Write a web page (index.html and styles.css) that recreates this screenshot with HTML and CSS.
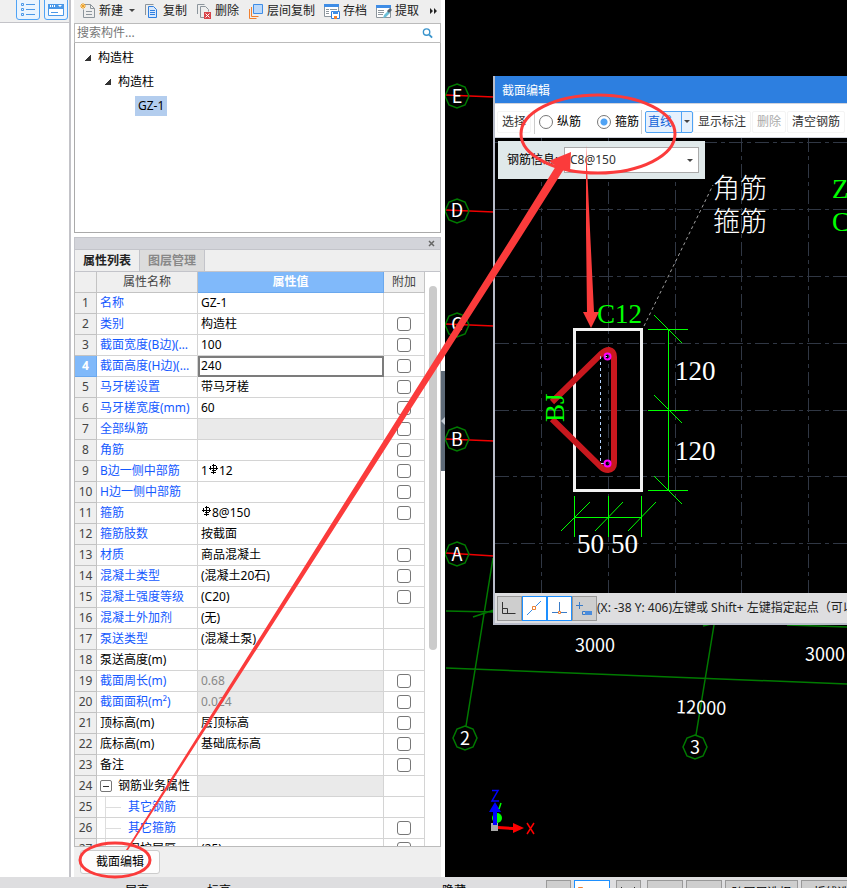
FILE: index.html
```html
<!DOCTYPE html>
<html lang="zh-CN">
<head>
    <meta charset="UTF-8">
    <title>截面编辑</title>
    <link rel="stylesheet" href="styles.css">
</head>
<body>
    <svg width="0" height="0" class="defs">
        <symbol id="rebar" viewBox="0 0 10 11">
            <path d="M4.500 0v10M2.500 1.500h4M1.500 2v4M7.500 2v4M2.500 6.500h4M0 4.500h9M2 8.500h5" fill="none" stroke="#000" shape-rendering="crispEdges"/>
        </symbol>
    </svg>
    <div class="main">
        <div class="side">
            <div class="side-bar">
                <button aria-label="列表"><svg width="16" height="16" viewBox="0 0 16 16" fill="none" stroke="#4a98e8"><path d="M6 3.500h9M6 8.500h9M6 13.500h9M1.500 2.500h2v2h-2zM1.500 7.500h2v2h-2zM1.500 12.500h2v2h-2z"/></svg></button>
                <button aria-label="窗口"><svg width="16" height="16" viewBox="0 0 16 16"><path d="M.500 3.500h15v11H.500z" fill="#fff" stroke="#4a98e8"/><path d="M0 3h16v5H0z" fill="#4a98e8"/><path d="M3 11.500h7" stroke="#4a98e8"/><path d="M2 4h1v2H2zM4 4h1v2H4zM6 4h1v2H6zM10 4h4l-2 2z" fill="#fff"/></svg></button>
            </div>
        </div>
        <div class="panel">
            <div class="toolbar">
                <button><svg width="16" height="16" viewBox="0 0 16 16" fill="none"><path d="M4.500 1.500h6l4 4v9h-11v-8M10.500 1.500v4h4M6 8.500h6M6 11.500h6" stroke="#8c959c"/><path d="M3 0v6M0 3h6M1 1l4 4M5 1l-4 4" stroke="#f0a020"/></svg>新建<i class="caret"></i></button>
                <button><svg width="16" height="16" viewBox="0 0 16 16" fill="none"><path d="M1.500 12V1.500h8" stroke="#8c959c"/><path d="M4.500 3.500h5l3 3v8h-8z" fill="#d8e8fc" stroke="#2f7fe0"/><path d="M6 7.500h5M6 9.500h5M6 11.500h5" stroke="#2f7fe0"/></svg>复制</button>
                <button><svg width="16" height="16" viewBox="0 0 16 16" fill="none"><path d="M1.500 11V1.500h7M8 14.500H4.500v-11h5l3 3v2" stroke="#8c959c"/><path d="M8 9h7v7H8z" fill="#d9444a"/><path d="M9.500 10.500l4 4M13.500 10.500l-4 4" stroke="#fff"/></svg>删除</button>
                <button><svg width="16" height="16" viewBox="0 0 16 16" fill="none"><path d="M1.500 6v9.500h7M3.500 4v9.500h7" stroke="#f08030"/><path d="M5.500 1.500h9v9h-9z" fill="#bcd9fa" stroke="#3f8de6"/></svg>层间复制</button>
                <button><svg width="16" height="16" viewBox="0 0 16 16" fill="none"><path d="M.500 1.500h14v12H.500z" fill="#fff" stroke="#8c959c"/><path d="M0 1h15v3H0z" fill="#3f8de6"/><path d="M2 6.500h3M2 8.500h3M2 10.500h3M6 6.500h7" stroke="#8c959c"/><path d="M7.500 8.500h8v7h-8z" fill="#fff" stroke="#2f7fe0"/><path d="M9 8h5v3H9z" fill="#3f8de6"/><path d="M10 13h3v3h-3z" fill="#f08030"/></svg>存档</button>
                <button><svg width="16" height="16" viewBox="0 0 16 16" fill="none"><path d="M.500 3.500h14v11H.500z" fill="#fff" stroke="#8c959c"/><path d="M0 2h15v3H0z" fill="#3f8de6"/><path d="M2 7.500h6M2 9.500h6M2 11.500h5" stroke="#8c959c"/><path d="M7 15l1-3 4-4 2 2-4 4z" fill="#6cc0d8"/><path d="M11 8l3-3 2 2-3 3z" fill="#566470"/></svg>提取</button>
                <button class="more" aria-label="更多"><svg width="8" height="6" viewBox="0 0 8 6"><path d="M0 0l3 3-3 3zM4 0l3 3-3 3z" fill="#222"/></svg></button>
            </div>
            <div class="search">
                <input type="text" placeholder="搜索构件..." aria-label="搜索构件">
                <svg width="11" height="12" viewBox="0 0 12 12" fill="none" stroke="#3a94cc"><circle cx="5" cy="5" r="3.500" stroke-width="1.500"/><path d="M8 8l3 3" stroke-width="2"/></svg>
            </div>
            <ul class="tree">
                <li><span><i class="fold"></i>构造柱</span>
                    <ul>
                        <li><span><i class="fold"></i>构造柱</span>
                            <ul>
                                <li><span><b>GZ-1</b></span></li>
                            </ul>
                        </li>
                    </ul>
                </li>
            </ul>
            <div class="dock-title"><button aria-label="关闭"><svg width="7" height="7" viewBox="0 0 7 7"><path d="M1 1l5 5M6 1L1 6" stroke="#666" stroke-width="1.500"/></svg></button></div>
            <div class="tabs">
                <button class="on">属性列表</button>
                <button>图层管理</button>
            </div>
            <div class="props">
                <table>
                    <colgroup><col class="c-num"><col class="c-name"><col><col class="c-add"></colgroup>
                    <thead>
                        <tr><th></th><th>属性名称</th><th class="cur">属性值</th><th>附加</th></tr>
                    </thead>
                    <tbody>
                        <tr><th>1</th><td class="key">名称</td><td>GZ-1</td><td></td></tr>
                        <tr><th>2</th><td class="key">类别</td><td>构造柱</td><td><input type="checkbox" aria-label="类别"></td></tr>
                        <tr><th>3</th><td class="key">截面宽度(B边)(mm)</td><td>100</td><td><input type="checkbox" aria-label="截面宽度"></td></tr>
                        <tr><th class="cur">4</th><td class="key">截面高度(H边)(mm)</td><td class="edit">240</td><td><input type="checkbox" aria-label="截面高度"></td></tr>
                        <tr><th>5</th><td class="key">马牙槎设置</td><td>带马牙槎</td><td><input type="checkbox" aria-label="马牙槎设置"></td></tr>
                        <tr><th>6</th><td class="key">马牙槎宽度(mm)</td><td>60</td><td><input type="checkbox" aria-label="马牙槎宽度"></td></tr>
                        <tr><th>7</th><td class="key">全部纵筋</td><td class="off"></td><td><input type="checkbox" aria-label="全部纵筋"></td></tr>
                        <tr><th>8</th><td class="key">角筋</td><td></td><td><input type="checkbox" aria-label="角筋"></td></tr>
                        <tr><th>9</th><td class="key">B边一侧中部筋</td><td>1<svg class="rebar"><use href="#rebar"/></svg>12</td><td><input type="checkbox" aria-label="B边一侧中部筋"></td></tr>
                        <tr><th>10</th><td class="key">H边一侧中部筋</td><td></td><td><input type="checkbox" aria-label="H边一侧中部筋"></td></tr>
                        <tr><th>11</th><td class="key">箍筋</td><td><svg class="rebar"><use href="#rebar"/></svg>8@150</td><td><input type="checkbox" aria-label="箍筋"></td></tr>
                        <tr><th>12</th><td class="key">箍筋肢数</td><td>按截面</td><td></td></tr>
                        <tr><th>13</th><td class="key">材质</td><td>商品混凝土</td><td><input type="checkbox" aria-label="材质"></td></tr>
                        <tr><th>14</th><td class="key">混凝土类型</td><td>(混凝土20石)</td><td><input type="checkbox" aria-label="混凝土类型"></td></tr>
                        <tr><th>15</th><td class="key">混凝土强度等级</td><td>(C20)</td><td><input type="checkbox" aria-label="混凝土强度等级"></td></tr>
                        <tr><th>16</th><td class="key">混凝土外加剂</td><td>(无)</td><td></td></tr>
                        <tr><th>17</th><td class="key">泵送类型</td><td>(混凝土泵)</td><td></td></tr>
                        <tr><th>18</th><td>泵送高度(m)</td><td></td><td></td></tr>
                        <tr><th>19</th><td class="key">截面周长(m)</td><td class="off">0.68</td><td><input type="checkbox" aria-label="截面周长"></td></tr>
                        <tr><th>20</th><td class="key">截面面积(m²)</td><td class="off">0.024</td><td><input type="checkbox" aria-label="截面面积"></td></tr>
                        <tr><th>21</th><td>顶标高(m)</td><td>层顶标高</td><td><input type="checkbox" aria-label="顶标高"></td></tr>
                        <tr><th>22</th><td>底标高(m)</td><td>基础底标高</td><td><input type="checkbox" aria-label="底标高"></td></tr>
                        <tr><th>23</th><td>备注</td><td></td><td><input type="checkbox" aria-label="备注"></td></tr>
                        <tr><th>24</th><td><button class="minus" aria-label="折叠"></button>钢筋业务属性</td><td class="off"></td><td></td></tr>
                        <tr><th>25</th><td class="key child">其它钢筋</td><td></td><td></td></tr>
                        <tr><th>26</th><td class="key child">其它箍筋</td><td></td><td><input type="checkbox" aria-label="其它箍筋"></td></tr>
                        <tr><th>27</th><td class="child">保护层厚度(mm)</td><td>(25)</td><td><input type="checkbox" aria-label="保护层厚度"></td></tr>
                    </tbody>
                </table>
                <div class="scroll"><div class="thumb"></div></div>
            </div>
            <div class="panel-foot"><button>截面编辑</button></div>
        </div>
        <div class="splitter"><div class="grip"><svg width="4" height="8" viewBox="0 0 4 8"><path d="M4 0v8L0 4z" fill="#c5ccd4"/></svg></div></div>
        <div class="view">
            <!-- 轴网 -->
            <svg class="plan" width="100%" height="100%">
                <g transform="translate(-445)">
                    <g stroke="#f00000" stroke-width="1.500">
                        <path d="M446 95l48 2M446 210l48 2M446 324l48 2M446 439l48 2M446 553l48 3"/>
                    </g>
                    <g fill="none" stroke="#007a00" stroke-width="1.500">
                        <path id="node" d="M457 84l8 3 4 9-4 9-8 3-8-3-4-9 4-9z"/>
                        <use href="#node" y="115"/>
                        <use href="#node" y="229"/>
                        <use href="#node" y="343"/>
                        <use href="#node" y="458"/>
                        <use href="#node" x="8" y="642"/>
                        <use href="#node" x="238" y="651"/>
                        <path d="M493 558l-27 168M446 611l48 1M473 617l21-7M446 668l401 16M714 625l-18 110M703 626l8-2M787 625l60 2"/>
                    </g>
                    <g class="axis-name">
                        <text x="457" y="103">E</text>
                        <text x="457" y="217">D</text>
                        <text x="457" y="331">C</text>
                        <text x="457" y="446">B</text>
                        <text x="457" y="561">A</text>
                        <text x="465" y="745">2</text>
                        <text x="695" y="754">3</text>
                        <text x="595" y="652">3000</text>
                        <text x="825" y="661">3000</text>
                        <text x="701" y="714" transform="rotate(2 701 714)">12000</text>
                    </g>
                    <!-- 坐标系 -->
                    <circle cx="497" cy="818" r="5" fill="#0f0"/>
                    <path d="M491 823h7v8h-7z" fill="#aaa"/>
                    <path d="M493 825v-13h-4l6-10 6 10h-4v13z" fill="#00f"/>
                    <path d="M498 826l15 1v-4l11 5-11 5v-3l-15-1z" fill="#f00"/>
                    <g fill="none">
                        <path d="M492 790.500h6l-6 10.500h7" stroke="#00f" stroke-width="1.500"/>
                        <path d="M501 803l-2 6" stroke="#0f0" stroke-width="1.500"/>
                        <path d="M527 823l7 11M534 823l-7 11" stroke="#f00" stroke-width="1.500"/>
                    </g>
                </g>
            </svg>
            <div class="dialog">
                <div class="dialog-title">截面编辑</div>
                <div class="dialog-bar">
                    <button>选择</button>
                    <div class="group">
                        <label><input type="radio" name="bar">纵筋</label>
                        <label><input type="radio" name="bar" checked>箍筋</label>
                    </div>
                    <div class="split"><button>直线</button><button aria-label="更多画法"><i class="caret"></i></button></div>
                    <button>显示标注</button>
                    <button disabled>删除</button>
                    <button>清空钢筋</button>
                </div>
                <div class="canvas">
                    <svg width="100%" height="100%">
                        <g transform="translate(-495 -138)">
                            <path class="grid" d="M541.500 138v460M608.500 138v460M675.500 138v460M741.500 138v460M808.500 138v460M495 142.500h800M495 209.500h800M495 276.500h800M495 343.500h800M495 410.500h800M495 476.500h800M495 543.500h800"/>
                            <path d="M644 326l69-141" stroke="#a0a0a0" stroke-dasharray="3 3"/>
                            <path d="M574.500 329.500h67v161h-67z" fill="none" stroke="#f2f2f2" stroke-width="3"/>
                            <path d="M552 402l49-48q4-4 8-4q5 1 5 7v106q0 6-6 7q-4 0-7-3l-49-48" fill="none" stroke="#c8181e" stroke-width="6"/>
                            <path d="M607 356.500h-6.500v107h6.500" fill="none" stroke="#b4d4ff" stroke-dasharray="3 3"/>
                            <g fill="none" stroke="#f0f" stroke-width="2">
                                <circle cx="607.500" cy="356.500" r="3"/>
                                <circle cx="607.500" cy="463.500" r="3"/>
                            </g>
                            <g stroke="#0f0">
                                <path d="M668.500 329v162M648 329.500h40M648 410.500h40M648 490.500h40M654 315l28 28M654 395l28 28M654 476l28 28"/>
                                <path d="M574 517.500h68M574.500 496v41M608.500 496v41M641.500 496v41M561 531l29-29M595 531l28-29M628 531l28-29"/>
                            </g>
                            <g class="cad">
                                <text x="713" y="198">角筋</text>
                                <text x="713" y="231">箍筋</text>
                                <text x="675" y="380">120</text>
                                <text x="675" y="460">120</text>
                                <text x="577" y="553">50</text>
                                <text x="611" y="553">50</text>
                            </g>
                            <g class="cad green">
                                <text x="832" y="198">Z</text>
                                <text x="832" y="231">C</text>
                                <text x="597" y="323">C12</text>
                                <text transform="translate(564 422) rotate(-90)">BJ</text>
                            </g>
                        </g>
                    </svg>
                    <div class="info">
                        <label for="bar-info">钢筋信息:</label>
                        <div class="combo">
                            <select id="bar-info"><option>C8@150</option></select>
                            <i class="caret"></i>
                        </div>
                    </div>
                </div>
                <div class="dialog-status">
                    <button aria-label="正交"><svg width="23" height="23" viewBox="0 0 23 23"><path d="M4.500 5v11.500h13M4.500 11.500h5v5" fill="none" stroke="#333"/></svg></button>
                    <button class="on" aria-label="中点"><svg width="23" height="23" viewBox="0 0 23 23"><path d="M4 18L18 4" stroke="#3a8ee6"/><path d="M9.500 9.500h3v3h-3z" fill="#fff" stroke="#f08030"/></svg></button>
                    <button class="on" aria-label="垂点"><svg width="23" height="23" viewBox="0 0 23 23"><path d="M4 15.500h15M11.500 5v10" stroke="#3a7cc8"/><path d="M10.500 14.500h2v2h-2z" fill="#fff" stroke="#f08030"/></svg></button>
                    <button aria-label="动态输入"><svg width="23" height="23" viewBox="0 0 23 23"><path d="M3 8.500h7M6.500 5v7M9.500 14.500h9v3h-9z" fill="none" stroke="#3a7cc8"/><path d="M12 14h7v4h-7z" fill="#4a8cdc"/></svg></button>
                    <span>(X: -38 Y: 406)左键或 Shift+ 左键指定起点（可以捕捉）</span>
                </div>
            </div>
        </div>
    </div>
    <div class="status">
        <span class="floor">层高:</span>
        <span class="level">标高:</span>
        <span class="hidden-count">隐藏:</span>
        <button class="sm" aria-label="正交"><svg width="23" height="16" viewBox="0 0 23 16"><path d="M4.500 5v11" stroke="#333"/></svg></button>
        <button class="on" aria-label="对象捕捉"><svg width="34" height="16" viewBox="0 0 34 16"><path d="M8 4.500h10V16" fill="none" stroke="#3a7cc8"/><path d="M3.500 3.500h4V16h-4z" fill="#f8c090" stroke="#f08030"/></svg></button>
        <button class="sm" aria-label="交点"><svg width="23" height="16" viewBox="0 0 23 16"><path d="M4 3l12 12M18 3L6 15" stroke="#333"/></svg></button>
        <button aria-label="垂点"><svg width="34" height="16" viewBox="0 0 34 16"><path d="M16 4l-8 10" stroke="#333"/></svg></button>
        <button aria-label="中点"><svg width="34" height="16" viewBox="0 0 34 16"><path d="M7.500 5v11" stroke="#333"/></svg></button>
        <button class="txt">跨图层选择</button>
        <button class="txt">折线选择</button>
    </div>
    <!-- 红色标注 -->
    <svg class="marks">
        <g fill="none" stroke="#fb3b3b">
            <ellipse cx="598" cy="134" rx="77" ry="39" stroke-width="3"/>
            <ellipse cx="115" cy="860" rx="35" ry="17" stroke-width="3"/>
        </g>
        <g fill="#fb3b3b">
            <path d="M126 850L510 240l46-74-7-5 22-9-1 20-6-3-45 71L128 850z"/>
            <path d="M586 145l4 85 4 82h5l-8 16-8-16h4l-1-82z"/>
        </g>
    </svg>
</body>
</html>
```
FILE: styles.css
```css
* {
    box-sizing: border-box;
}
body {
    margin: 0;
    height: 100vh;
    display: flex;
    flex-direction: column;
    overflow: hidden;
    background: #fff;
    color: #000;
    font: 12px/20px "Noto Sans", "Noto Sans CJK SC", sans-serif;
}
button, input, select {
    margin: 0;
    padding: 0;
    border: 0;
    background: none;
    color: inherit;
    font: inherit;
}
button {
    white-space: nowrap;
}
svg {
    flex: none;
}
.defs {
    position: absolute;
}
.caret {
    flex: none;
    border: 3px solid transparent;
    border-top-color: #444;
    border-bottom: 0;
}
.main {
    flex: 1;
    min-height: 0;
    display: flex;
}

/* 左侧 */
.side {
    flex: none;
    width: 71px;
    border-right: 2px solid #c3c3c8;
}
.side-bar {
    height: 23px;
    padding: 0 1px 2px 0;
    display: flex;
    justify-content: flex-end;
    align-items: flex-end;
    gap: 4px;
    background: #f0f0f0;
    border-bottom: 1px solid #c3c3c8;
}
.side-bar button {
    flex: none;
    width: 24px;
    height: 24px;
    padding-top: 2px;
    line-height: 0;
    background: #eaf4fe;
    border: 1px solid #4fa3f5;
    border-radius: 3px;
}

/* 构件面板 */
.panel {
    flex: none;
    width: 367px;
    margin-left: 3px;
    display: flex;
    flex-direction: column;
}
.toolbar {
    flex: none;
    height: 24px;
    padding: 0 3px 2px 6px;
    display: flex;
    align-items: center;
    gap: 9px;
    background: #eee;
    border-bottom: 1px solid #bbb;
    color: #222;
}
.toolbar button {
    display: flex;
    align-items: center;
    gap: 3px;
}
.toolbar .caret {
    margin-left: 3px;
}
.toolbar .more {
    margin-left: auto;
}
.search {
    flex: none;
    height: 19px;
    padding: 0 7px 0 2px;
    display: flex;
    align-items: center;
    border: 1px solid #bbb;
    border-top: 0;
}
.search input {
    flex: 1;
    height: 18px;
    outline: 0;
}
.search input::placeholder {
    color: #777;
}
.tree {
    flex: none;
    height: 190px;
    margin: 0;
    padding: 3px 0 0 10px;
    border: 1px solid #aaa;
    border-top: 0;
    list-style: none;
}
.tree ul {
    padding-left: 20px;
    list-style: none;
}
.tree span {
    display: flex;
    align-items: center;
    gap: 7px;
    height: 24px;
}
.tree b {
    padding: 0 3px;
    background: #b3cdee;
    font-weight: normal;
}
.tree ul ul {
    padding-left: 30px;
}
.fold {
    width: 6px;
    height: 6px;
    background: linear-gradient(135deg, transparent 50%, #333 50%);
}
.dock-title {
    flex: none;
    height: 13px;
    margin-top: 4px;
    padding-right: 5px;
    display: flex;
    align-items: center;
    justify-content: flex-end;
    background: #d3d4da;
    border: 1px solid #c3c4ca;
}
.dock-title button {
    line-height: 0;
}
.tabs {
    flex: none;
    height: 22px;
    display: flex;
    background: #efefef;
    border: 1px solid #c3c4ca;
    border-width: 0 1px 1px;
}
.tabs button {
    width: 65px;
    background: #dcdcdc;
    border-right: 1px solid #c3c4ca;
    color: #888;
    font-weight: bold;
}
.tabs .on {
    background: #efefef;
    color: #222;
}

/* 属性表 */
.props {
    flex: 1;
    min-height: 0;
    display: flex;
    overflow: hidden;
    border: 1px solid #bbb;
    border-top: 0;
}
.props table {
    width: calc(100% - 15px);
    table-layout: fixed;
    border-spacing: 0;
    align-self: flex-start;
}
.c-num {
    width: 22px;
}
.c-name {
    width: 101px;
}
.c-add {
    width: 41px;
}
.props th, .props td {
    height: 21px;
    padding: 0 3px;
    overflow: hidden;
    border: solid #d4d4d4;
    border-width: 0 1px 1px 0;
    white-space: nowrap;
    text-overflow: ellipsis;
    text-align: left;
    line-height: 20px;
}
.props th {
    padding: 0;
    background: #efefef;
    border-color: #c3c3c3;
    color: #444;
    font-weight: normal;
    text-align: center;
}
.props .cur {
    background: #80b9fa;
    border-color: #6aa8ee;
    color: #fff;
    font-weight: bold;
}
.props .key {
    color: #1459ff;
}
.props .off {
    background: #eaeaea;
    color: #888;
}
.props .edit {
    outline: 2px solid #7c7c7c;
    outline-offset: -2px;
}
.props .child {
    padding-left: 31px;
    background: linear-gradient(#ddd, #ddd) 8px 0/1px 100% no-repeat, linear-gradient(#ddd, #ddd) 9px 10px/15px 1px no-repeat;
}
.props td:last-child {
    padding: 0;
    text-align: center;
}
.props input {
    display: block;
    width: 14px;
    height: 14px;
    margin: 0 auto;
    appearance: none;
    background: #fff;
    border: 1px solid #777;
    border-radius: 3px;
}
.rebar {
    width: 10px;
    height: 11px;
    margin: 0 0 0 1px;
}
.minus {
    width: 12px;
    height: 12px;
    margin-right: 6px;
    vertical-align: -1px;
    background: linear-gradient(#333, #333) center/6px 1px no-repeat;
    border: 1px solid #777;
    border-radius: 2px;
}
.scroll {
    flex: none;
    width: 15px;
    padding: 14px 3px 0 4px;
}
.thumb {
    height: 364px;
    background: #cbcbcb;
    border-radius: 4px;
}
.panel-foot {
    flex: none;
    height: 30px;
    padding: 3px 6px;
    background: #efefef;
}
.panel-foot button {
    width: 80px;
    height: 24px;
    background: #fdfdfd;
    border: 1px solid #ccc;
    border-radius: 3px;
}
.splitter {
    flex: none;
    width: 4px;
    display: flex;
    align-items: center;
}
.grip {
    width: 4px;
    height: 100px;
    margin-bottom: 36px;
    display: flex;
    align-items: center;
    background: #5f6b78;
}

/* 绘图区 */
.view {
    flex: 1;
    min-width: 0;
    position: relative;
    overflow: hidden;
    background: #000;
}
.plan {
    display: block;
}
.axis-name {
    fill: #fff;
    font: 18px "Noto Sans CJK SC", sans-serif;
    text-anchor: middle;
}
.dialog {
    position: absolute;
    top: 76px;
    left: 48px;
    right: 0;
    border: solid #b9bdca;
    border-width: 0 0 2px 2px;
}
.dialog-title {
    height: 27px;
    padding: 0 7px;
    background: #2d7fe0;
    color: #fff;
    line-height: 29px;
}
.dialog-bar {
    height: 35px;
    padding: 2px 2px 0;
    display: flex;
    align-items: center;
    overflow: hidden;
    background: #fff;
    border: solid #d0d3dc;
    border-width: 1px 0;
}
.dialog-bar button {
    flex: none;
    height: 22px;
    padding: 0 4px;
    margin-right: 1px;
    border: 1px solid #f4f4f4;
    border-radius: 2px;
    color: #333;
}
.dialog-bar button:disabled {
    color: #aaa;
}
.group {
    flex: none;
    height: 24px;
    margin: 0 3px 0 2px;
    padding: 0 2px 0 4px;
    display: flex;
    align-items: center;
    gap: 16px;
    border: solid #ccc;
    border-width: 0 1px;
}
.group label {
    display: flex;
    align-items: center;
    gap: 4px;
}
.group input {
    width: 14px;
    height: 14px;
    appearance: none;
    background: #fff;
    border: 1px solid #777;
    border-radius: 50%;
}
.group input:checked {
    background: radial-gradient(#4fa3f5 3px, #fff 4px);
}
.split {
    flex: none;
    display: flex;
    background: #e6f1fd;
    border: 1px solid #4fa3f5;
    border-radius: 2px;
}
.dialog-bar .split button {
    height: 20px;
    margin: 0;
    padding: 0 9px 0 2px;
    border: 0;
    color: #0f62d8;
}
.dialog-bar .split button + button {
    display: flex;
    align-items: center;
    padding: 0 2px;
    border-left: 1px solid #4fa3f5;
    border-radius: 0;
}
.canvas {
    position: relative;
    height: 455px;
    overflow: hidden;
    background: #000;
}
.grid {
    fill: none;
    stroke: #303744;
    stroke-dasharray: 14 4 4 4;
}
.cad {
    fill: #fff;
    font: 300 27px "Liberation Serif", "Noto Sans CJK SC", serif;
}
.green {
    fill: #0f0;
}
.info {
    position: absolute;
    top: 3px;
    left: 3px;
    width: 207px;
    height: 38px;
    padding: 0 6px 0 9px;
    display: flex;
    align-items: center;
    justify-content: space-between;
    background: #e0e9ea;
}
.combo {
    width: 135px;
    height: 26px;
    padding-right: 5px;
    display: flex;
    align-items: center;
    background: #fff;
    border: 1px solid #aaa;
}
.combo select {
    flex: 1;
    height: 24px;
    padding-left: 5px;
    appearance: none;
    color: #333;
}
.dialog-status {
    height: 30px;
    padding: 0 2px;
    display: flex;
    align-items: center;
    overflow: hidden;
    background: #dedee0;
    color: #222;
    white-space: nowrap;
}
.dialog-status button {
    flex: none;
    width: 25px;
    height: 25px;
    line-height: 0;
    background: #cecece;
    border: 1px solid #999;
}
.dialog-status .on, .status .on {
    background: #fff;
    border-color: #1e90ff;
}

/* 状态栏 */
.status {
    flex: none;
    height: 11px;
    padding-top: 3px;
    display: flex;
    align-items: flex-start;
    gap: 3px;
    overflow: hidden;
    background: #dedee0;
    white-space: nowrap;
}
.status span {
    flex: none;
    padding-top: 1px;
}
.floor {
    margin-left: 125px;
    width: 79px;
}
.level {
    width: 232px;
}
.hidden-count {
    width: 101px;
}
.status button {
    flex: none;
    width: 36px;
    height: 24px;
    background: #cecece;
    border: 1px solid #999;
}
.status svg {
    display: block;
}
.status .sm {
    width: 25px;
}
.status .sm + .on {
    margin-right: 3px;
}
.status .on + .sm {
    margin-right: 3px;
}
.status .txt {
    width: 73px;
    padding-top: 1px;
}
.marks {
    position: absolute;
    top: 0;
    left: 0;
    width: 100%;
    height: 100%;
    pointer-events: none;
}
```
